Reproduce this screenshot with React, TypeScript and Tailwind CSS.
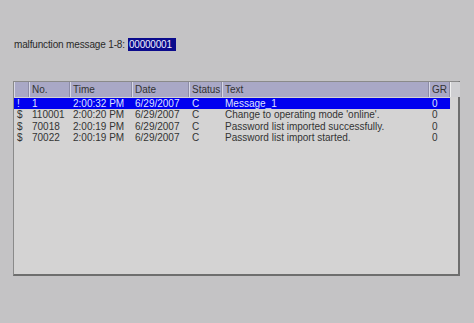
const cols = [
  { key: "flag", label: "", w: "w-[15px]" },
  { key: "no", label: "No.", w: "w-[41px]" },
  { key: "time", label: "Time", w: "w-[62px]" },
  { key: "date", label: "Date", w: "w-[57px]" },
  { key: "status", label: "Status", w: "w-[33px]" },
  { key: "text", label: "Text", w: "w-[207px]" },
  { key: "gr", label: "GR", w: "w-[21px]" },
] as const;

type Row = Record<(typeof cols)[number]["key"], string>;

const rows: Row[] = [
  { flag: "!", no: "1", time: "2:00:32 PM", date: "6/29/2007", status: "C", text: "Message_1", gr: "0" },
  { flag: "$", no: "110001", time: "2:00:20 PM", date: "6/29/2007", status: "C", text: "Change to operating mode 'online'.", gr: "0" },
  { flag: "$", no: "70018", time: "2:00:19 PM", date: "6/29/2007", status: "C", text: "Password list imported successfully.", gr: "0" },
  { flag: "$", no: "70022", time: "2:00:19 PM", date: "6/29/2007", status: "C", text: "Password list import started.", gr: "0" },
];

export default function App() {
  return (
    <div className="w-[474px] h-[323px] bg-[#c4c3c5] font-['Liberation_Sans',Arial,sans-serif] text-[10px] text-[#2a2a2a] pt-[38px] pl-[13px]">
      {/* Meldung */}
      <div className="flex items-center h-[13px] pl-[1px]">
        <span className="mr-[3px] tracking-[-0.15px]">malfunction message 1-8:</span>
        <span className="bg-[#0a0a8c] text-[#f0f0ff] h-[13px] leading-[13px] px-[1px] w-[48px] tracking-[-0.2px]">
          00000001
        </span>
      </div>

      {/* Meldeansicht */}
      <div className="mt-[30px] w-[447px] h-[195px] bg-[#d4d3d3] border-l border-t border-[#8a8a8a] border-r-2 border-b-2 border-r-[#6e6e6e] border-b-[#6e6e6e]">
        <div className="flex h-[15px] bg-[#a9a8c6] leading-[15px] text-[#333]">
          {cols.map((c) => (
            <div key={c.key} className={`${c.w} shrink-0 border-r border-[#8c8ca6] border-l border-l-[#d8d8e6] pl-[2px] overflow-hidden whitespace-nowrap`}>
              {c.label}
            </div>
          ))}
          <div className="w-[10px] shrink-0 bg-[#cfcfd2] border-l border-l-[#f0f0f0]" />
        </div>
        <div className="pt-[1px]">
          {rows.map((r, i) => (
            <div
              key={i}
              className={`flex h-[11.3px] leading-[11px] w-[436px] ${i === 0 ? "bg-[#0000f0] text-[#dfe0ff]" : "text-[#333]"}`}
            >
              {cols.map((c) => (
                <div key={c.key} className={`${c.w} shrink-0 pl-[3px] overflow-hidden whitespace-nowrap`}>
                  {r[c.key]}
                </div>
              ))}
            </div>
          ))}
        </div>
      </div>
    </div>
  );
}
